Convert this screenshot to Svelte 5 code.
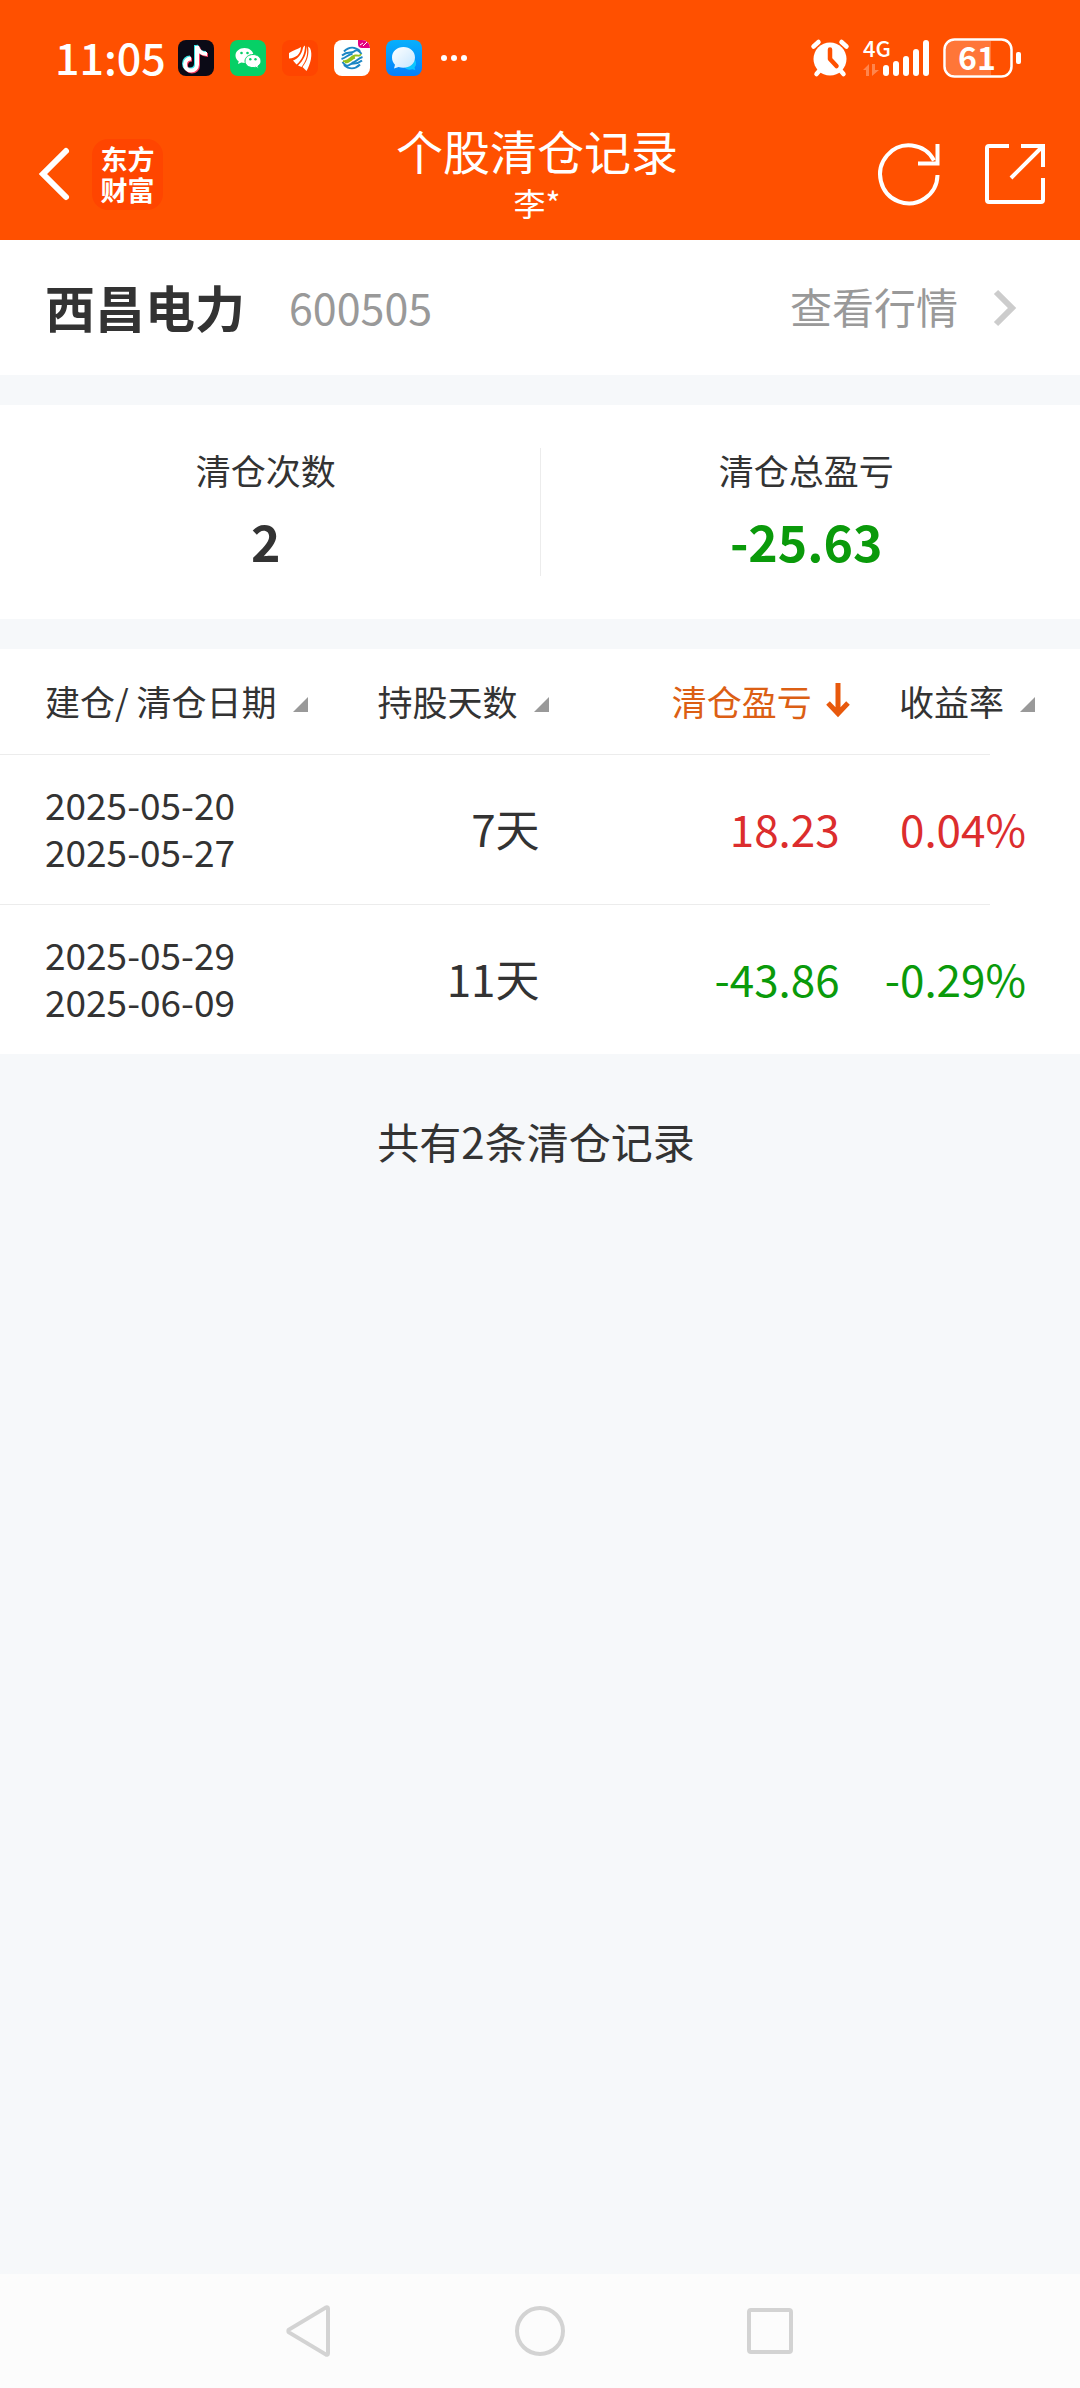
<script lang="ts">
	interface ClearRecord {
		opened: string;
		closed: string;
		days: number;
		profit: number;
		rate: number;
	}

	const stock = { name: '西昌电力', code: '600505' };

	const records: ClearRecord[] = [
		{ opened: '2025-05-20', closed: '2025-05-27', days: 7, profit: 18.23, rate: 0.04 },
		{ opened: '2025-05-29', closed: '2025-06-09', days: 11, profit: -43.86, rate: -0.29 }
	];

	const columns = [
		{ key: 'date', label: '建仓/ 清仓日期' },
		{ key: 'days', label: '持股天数' },
		{ key: 'profit', label: '清仓盈亏' },
		{ key: 'rate', label: '收益率' }
	];

	let sortKey = $state('profit');

	const total = records.reduce((sum, r) => sum + r.profit, 0);
</script>

<div class="page">
	<header>
		<div class="status">
			<div class="status-left">
				<span class="time">11:05</span>
				<div class="apps">
					<svg width="36" height="36" viewBox="0 0 36 36">
						<rect width="36" height="36" rx="8" fill="#0b0a16" />
						<g fill="none" stroke-width="4">
							<path d="M18 5v18.500a6 6 0 1 1-6-6M18 5c.5 4.500 4.500 8 10 8" stroke="#3de4e6" />
							<path d="M20 7v18.500a6 6 0 1 1-6-6M20 7c.5 4.500 4.500 8 10 8" stroke="#fb3f62" />
							<path d="M19 6v18.500a6 6 0 1 1-6-6M19 6c.5 4.500 4.500 8 10 8" stroke="#fff" />
						</g>
					</svg>
					<svg width="36" height="36" viewBox="0 0 36 36">
						<rect width="36" height="36" rx="8" fill="#06d066" />
						<path d="M14.500 8C9.500 8 5.500 11.300 5.500 15.500c0 2.400 1.200 4.400 3.200 5.800L8 24l3.300-1.600c1 .3 2.100.5 3.200.5 5 0 9-3.300 9-7.400S19.500 8 14.500 8z" fill="#fff" />
						<path d="M23 14.500c-4.400 0-8 2.900-8 6.600s3.600 6.500 8 6.500c1 0 1.900-.1 2.700-.4l2.900 1.400-.7-2.400c1.900-1.200 3.100-3 3.100-5.100 0-3.700-3.600-6.600-8-6.600z" fill="#fff" stroke="#06d066" />
						<g fill="#06d066">
							<circle cx="11.500" cy="13" r="1.300" />
							<circle cx="17.500" cy="13" r="1.300" />
							<circle cx="20.300" cy="19.300" r="1.200" />
							<circle cx="25.500" cy="19.300" r="1.200" />
						</g>
					</svg>
					<svg width="36" height="36" viewBox="0 0 36 36">
						<rect width="36" height="36" rx="8" fill="#ff4500" />
						<g fill="#fff">
							<path d="M19 7c-3 2-8 3.500-12 6v5.500c7-.5 11.500-4 12-11.500z" />
							<path d="M23 5.500c-1.500 1-2 2-2.300 3.500C19.500 14.500 16 18.500 11 20.500l3.500 4C19.500 20.500 23 14 23 5.500z" />
							<path d="M24.500 6c.5 7.500-3 14.500-8.500 19.500l3.500 1.500c4.500-5.500 7-13 5-21z" />
							<path d="M26 6.500c1.500 8-1 15-5.500 20.500l4 4C28.500 24 31 14 28 8z" />
						</g>
					</svg>
					<svg width="36" height="36" viewBox="0 0 36 36">
						<rect width="36" height="36" rx="8" fill="#fff" />
						<path d="M24 0h4a8 8 0 0 1 8 8h-8a4 4 0 0 1-4-4z" fill="#e5007f" />
						<path d="M26 5l3-2M29 6l4-4" stroke="#fff" fill="none" />
						<g fill="none" stroke="#1b86c4" stroke-width="2">
							<path d="M10 11.500C15 6.500 21 6.500 26 11" />
							<path d="M8 15.500c6-5 9-1.500 12-4s5-1 7.500 2.500" />
							<path d="M7.500 19c5-1.500 7-5 11-5" />
							<path d="M28.500 17c-5 1.500-7 6-11 6" />
							<path d="M28 20.500c-6 5-9 1.500-12 4s-5 1-7.500-2.500" />
							<path d="M26 24.500c-5 5-11 5-16 .5" />
						</g>
						<path d="M9 21c6 2 7-5 12-5.500s4 1.500 6-1.500M11 22.500c5 0 6-4 10-5" fill="none" stroke="#93c01f" stroke-width="2" />
					</svg>
					<svg width="36" height="36" viewBox="0 0 36 36">
						<defs>
							<linearGradient id="msg-bg" x2="0" y2="1">
								<stop stop-color="#07b0fc" />
								<stop offset="1" stop-color="#067ffb" />
							</linearGradient>
							<linearGradient id="msg-bubble" x2="1" y2="1">
								<stop stop-color="#fff" />
								<stop offset="1" stop-color="#c5e6ff" />
							</linearGradient>
						</defs>
						<rect width="36" height="36" rx="8" fill="url(#msg-bg)" />
						<path d="M29 20c2 3 1 6-.5 7.500l.8 2.500-3-.8c-3 1-6 .3-8-2z" fill="#0cc5ff" />
						<path d="M17.500 7C11 7 6 11.500 6 17.500c0 3 1.200 5.500 3 7.300L8 28.500l4.500-1.500c8 2.500 16.500-1.500 16.500-9.500C29 11.500 24 7 17.500 7z" fill="url(#msg-bubble)" />
					</svg>
					<svg width="32" height="36" viewBox="0 0 32 36" fill="#fff">
						<circle cx="6" cy="18" r="3" />
						<circle cx="16" cy="18" r="3" />
						<circle cx="26" cy="18" r="3" />
					</svg>
				</div>
			</div>
			<div class="status-right">
				<svg width="38" height="38" viewBox="0 0 38 38">
					<circle cx="19" cy="20" r="16.500" fill="#fff" />
					<path d="M2.500 7.500l5-4.500M35.500 7.500l-5-4.500M9 31l-3.500 4M29 31l3.500 4" stroke="#fff" stroke-width="4.500" stroke-linecap="round" />
					<path d="M19 10.500v9.500l6.500 7" fill="none" stroke="#ff5000" stroke-width="4.500" stroke-linecap="round" stroke-linejoin="round" />
				</svg>
				<svg width="66" height="38" viewBox="0 0 66 38" fill="#fff">
					<text class="net" x="0" y="18">4G</text>
					<g opacity="0.3">
						<path d="M0 31l6-6v12H3v-6z" />
						<path d="M9 25h3v6h4l-7 6z" />
					</g>
					<rect x="20" y="26" width="6" height="11" rx="3" />
					<rect x="30" y="22" width="6" height="15" rx="3" />
					<rect x="40" y="17" width="6" height="20" rx="3" />
					<rect x="50" y="10" width="6" height="27" rx="3" />
					<rect x="60" y="1" width="6" height="36" rx="3" />
				</svg>
				<svg width="78" height="40" viewBox="0 0 78 40" fill="#fff">
					<path d="M11 3h37v34H11a8 8 0 0 1-8-8V11a8 8 0 0 1 8-8z" opacity="0.22" />
					<rect x="1.500" y="1.500" width="67" height="37" rx="10" fill="none" stroke="#fff" stroke-width="2.500" />
					<rect x="73" y="14" width="5" height="12" rx="2" />
					<text class="charge" x="34" y="32" text-anchor="middle">61</text>
				</svg>
			</div>
		</div>

		<div class="titlebar">
			<div class="nav-left">
				<button aria-label="返回">
					<svg width="42" height="54" viewBox="0 0 42 54">
						<path d="M37 4L14 27l23 23" fill="none" stroke="#fff" stroke-width="6" stroke-linecap="round" />
					</svg>
				</button>
				<a class="logo" href="#home"><span>东方</span><span>财富</span></a>
			</div>
			<div class="title">
				<h1>个股清仓记录</h1>
				<p>李*</p>
			</div>
			<div class="nav-right">
				<button aria-label="刷新">
					<svg width="62" height="62" viewBox="0 0 62 62" fill="none" stroke="#fff" stroke-width="4">
						<path d="M59.500 32A28.700 29 0 1 1 56 17.500" />
						<path d="M59.500 1v19.500H40" />
					</svg>
				</button>
				<button aria-label="分享">
					<svg width="60" height="60" viewBox="0 0 60 60" fill="none" stroke="#fff" stroke-width="4">
						<path d="M24 2H4a2 2 0 0 0-2 2v52a2 2 0 0 0 2 2h52a2 2 0 0 0 2-2V34" />
						<path d="M36 2h22v21M58 2L26 34" />
					</svg>
				</button>
			</div>
		</div>
	</header>

	<main>
		<section class="stock">
			<h2>{stock.name}</h2>
			<span class="code">{stock.code}</span>
			<a href="#quote">
				查看行情
				<svg width="22" height="36" viewBox="0 0 22 36">
					<path d="M2 2l16 16L2 34" fill="none" stroke="#ccc" stroke-width="6" />
				</svg>
			</a>
		</section>

		<section class="summary">
			<div class="stat">
				<span>清仓次数</span>
				<strong>{records.length}</strong>
			</div>
			<div class="stat">
				<span>清仓总盈亏</span>
				<strong class:up={total > 0} class:down={total < 0}>{total.toFixed(2)}</strong>
			</div>
		</section>

		<section class="records">
			<table>
				<thead>
					<tr>
						{#each columns as col}
							<th class={col.key}>
								<button class="sort" class:active={sortKey === col.key} onclick={() => (sortKey = col.key)}>
									{col.label}
									{#if sortKey === col.key}
										<svg width="22" height="36" viewBox="0 0 22 36">
											<path d="M11 1v30M1 21l10 10.500L21 21" fill="none" stroke="#e8590c" stroke-width="5" />
										</svg>
									{:else}
										<svg width="16" height="24" viewBox="0 0 16 24">
											<path d="M16 9v15H1z" fill="#999" />
										</svg>
									{/if}
								</button>
							</th>
						{/each}
					</tr>
				</thead>
				<tbody>
					{#each records as r}
						<tr>
							<td class="date">{r.opened}<br />{r.closed}</td>
							<td>{r.days}天</td>
							<td class:up={r.profit > 0} class:down={r.profit < 0}>{r.profit.toFixed(2)}</td>
							<td class:up={r.rate > 0} class:down={r.rate < 0}>{r.rate.toFixed(2)}%</td>
						</tr>
					{/each}
				</tbody>
			</table>
		</section>

		<p class="count">共有{records.length}条清仓记录</p>
	</main>

	<nav>
		<button aria-label="返回上一页">
			<svg width="52" height="52" viewBox="0 0 52 52">
				<path d="M44 3.500v45a1.200 1.200 0 0 1-2 1L5 27.500a2 2 0 0 1 0-3l37-22a1.200 1.200 0 0 1 2 1z" />
			</svg>
		</button>
		<button aria-label="主屏幕">
			<svg width="52" height="52" viewBox="0 0 52 52">
				<circle cx="26" cy="26" r="23" />
			</svg>
		</button>
		<button aria-label="最近任务">
			<svg width="52" height="52" viewBox="0 0 52 52">
				<rect x="5" y="5" width="42" height="42" rx="2" />
			</svg>
		</button>
	</nav>
</div>

<style>
	:global(body) {
		background: #f6f8fa;
	}

	.page {
		min-height: 100vh;
		display: flex;
		flex-direction: column;
		font-family: 'Noto Sans CJK SC', sans-serif;
		color: #333;
	}

	h1,
	h2,
	p {
		margin: 0;
		font-weight: 400;
	}

	svg {
		display: block;
		flex: none;
		overflow: visible;
	}

	button {
		padding: 0;
		border: none;
		background: none;
		font: inherit;
		color: inherit;
		cursor: pointer;
	}

	a {
		color: inherit;
		text-decoration: none;
	}

	header {
		background: #ff5000;
		color: #fff;
	}

	.status {
		height: 116px;
		padding: 0 59px 0 55px;
		display: flex;
		justify-content: space-between;
		align-items: center;
	}

	.status-left {
		display: flex;
		align-items: center;
		gap: 12px;
	}

	.apps {
		display: flex;
		gap: 16px;
	}

	.status-right {
		display: flex;
		align-items: center;
		gap: 14px;
	}

	.time {
		padding-bottom: 4px;
		font-size: 43px;
		font-weight: 500;
		line-height: 48px;
	}

	.net {
		font-size: 22px;
		font-weight: 500;
	}

	.charge {
		font-size: 32px;
		font-weight: 700;
	}

	.titlebar {
		display: grid;
		grid-template-columns: 1fr auto 1fr;
		align-items: center;
		height: 116px;
		padding: 0 35px 8px 29px;
	}

	.nav-left {
		display: flex;
		align-items: center;
		gap: 21px;
	}

	.nav-right {
		display: flex;
		align-items: center;
		justify-content: flex-end;
		gap: 45px;
	}

	.logo {
		width: 71px;
		height: 71px;
		border-radius: 16px;
		background: #ff4500;
		display: flex;
		flex-direction: column;
		align-items: center;
		justify-content: center;
		font-size: 27px;
		font-weight: 700;
		line-height: 31px;
	}

	.title {
		padding-bottom: 4px;
		text-align: center;
	}

	.title h1 {
		font-size: 47px;
		line-height: 60px;
	}

	.title p {
		font-size: 32px;
		line-height: 44px;
	}

	.stock {
		display: flex;
		align-items: center;
		height: 131px;
		padding: 0 64px 4px 45px;
		background: #fff;
	}

	.stock h2 {
		font-size: 50px;
		font-weight: 700;
	}

	.stock .code {
		margin-left: 44px;
		font-size: 43px;
		color: #999;
	}

	.stock a {
		margin-left: auto;
		display: flex;
		align-items: center;
		gap: 36px;
		font-size: 42px;
		color: #999;
	}

	.stock svg {
		margin-top: 4px;
	}

	.summary {
		margin-top: 30px;
		padding: 43px 0;
		display: flex;
		background: #fff;
	}

	.stat {
		flex: 1;
		height: 128px;
		padding-right: 8px;
		display: flex;
		flex-direction: column;
		align-items: center;
	}

	.stat + .stat {
		border-left: 1px solid #ececec;
	}

	.stat span {
		font-size: 35px;
		line-height: 44px;
	}

	.stat strong {
		margin-top: 18px;
		font-size: 50px;
		line-height: 60px;
	}

	.up {
		color: #dc2d2d;
	}

	.down {
		color: #0a9a0a;
	}

	.records {
		margin-top: 30px;
		padding-right: 45px;
		background: #fff;
	}

	table {
		width: 100%;
		table-layout: fixed;
		border-collapse: collapse;
	}

	tr {
		background: linear-gradient(#ececec, #ececec) left bottom / calc(100% - 45px) 1px no-repeat;
	}

	tbody tr:last-child {
		background: none;
	}

	th {
		height: 102px;
		padding: 0 0 4px;
		font-size: 35px;
		font-weight: 400;
	}

	th.date {
		width: 30%;
		padding-left: 45px;
		box-sizing: border-box;
	}

	th.days {
		width: 23%;
	}

	th.profit {
		width: 29%;
	}

	.sort {
		display: flex;
		align-items: center;
		gap: 15px;
		margin-left: auto;
		white-space: nowrap;
	}

	th.date .sort {
		margin-left: 0;
	}

	.sort.active {
		color: #dc5f14;
	}

	td {
		height: 146px;
		padding: 0 9px 4px 0;
		font-size: 44px;
		text-align: right;
		white-space: nowrap;
	}

	tbody tr:last-child td {
		height: 145px;
	}

	td.date {
		padding-left: 45px;
		font-size: 37px;
		line-height: 47px;
		text-align: left;
	}

	.count {
		margin-top: 55px;
		padding-right: 8px;
		font-size: 42px;
		line-height: 64px;
		text-align: center;
	}

	nav {
		margin-top: auto;
		height: 114px;
		display: flex;
		align-items: center;
		justify-content: center;
		gap: 178px;
		background: #fcfcfc;
	}

	nav svg {
		fill: none;
		stroke: #d3d3d3;
		stroke-width: 4;
	}
</style>
